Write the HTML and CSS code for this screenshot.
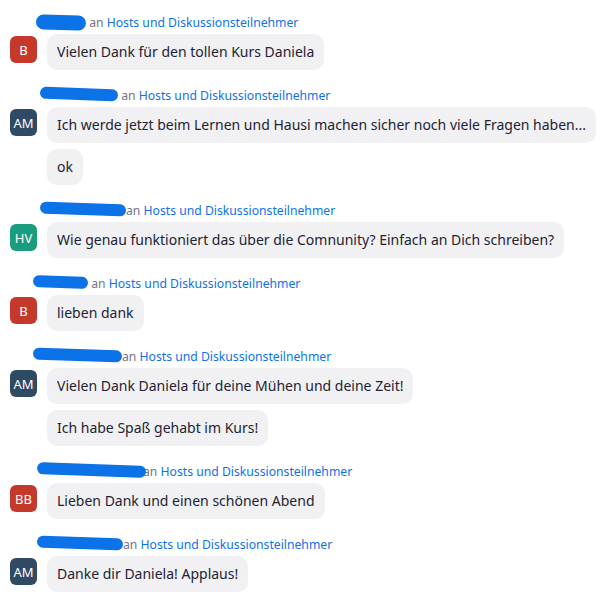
FILE: index.html
```html
<!DOCTYPE html>
<html lang="de">
<head>
    <meta charset="UTF-8">
    <meta name="viewport" content="width=device-width, initial-scale=1.0">
    <title>Chat</title>
    <link rel="stylesheet" href="styles.css">
</head>
<body>

<div class="chat">

    <div class="msg">
        <div class="meta"><span class="name n1"></span> an <span class="to">Hosts und Diskussionsteilnehmer</span></div>
        <div class="row">
            <div class="avatar red">B</div>
            <div class="bubbles">
                <div class="bubble">Vielen Dank für den tollen Kurs Daniela</div>
            </div>
        </div>
    </div>

    <div class="msg">
        <div class="meta"><span class="name n2"></span> an <span class="to">Hosts und Diskussionsteilnehmer</span></div>
        <div class="row">
            <div class="avatar navy">AM</div>
            <div class="bubbles">
                <div class="bubble">Ich werde jetzt beim Lernen und Hausi machen sicher noch viele Fragen haben...</div>
                <div class="bubble">ok</div>
            </div>
        </div>
    </div>

    <div class="msg">
        <div class="meta"><span class="name n3"></span>an <span class="to">Hosts und Diskussionsteilnehmer</span></div>
        <div class="row">
            <div class="avatar teal">HV</div>
            <div class="bubbles">
                <div class="bubble">Wie genau funktioniert das über die Comnunity? Einfach an Dich schreiben?</div>
            </div>
        </div>
    </div>

    <div class="msg">
        <div class="meta"><span class="name n4"></span> an <span class="to">Hosts und Diskussionsteilnehmer</span></div>
        <div class="row">
            <div class="avatar red">B</div>
            <div class="bubbles">
                <div class="bubble">lieben dank</div>
            </div>
        </div>
    </div>

    <div class="msg">
        <div class="meta"><span class="name n5"></span>an <span class="to">Hosts und Diskussionsteilnehmer</span></div>
        <div class="row">
            <div class="avatar navy">AM</div>
            <div class="bubbles">
                <div class="bubble">Vielen Dank Daniela für deine Mühen und deine Zeit!</div>
                <div class="bubble">Ich habe Spaß gehabt im Kurs!</div>
            </div>
        </div>
    </div>

    <div class="msg">
        <div class="meta"><span class="name n6"></span>an <span class="to">Hosts und Diskussionsteilnehmer</span></div>
        <div class="row">
            <div class="avatar red">BB</div>
            <div class="bubbles">
                <div class="bubble">Lieben Dank und einen schönen Abend</div>
            </div>
        </div>
    </div>

    <div class="msg">
        <div class="meta"><span class="name n7"></span>an <span class="to">Hosts und Diskussionsteilnehmer</span></div>
        <div class="row">
            <div class="avatar navy">AM</div>
            <div class="bubbles">
                <div class="bubble">Danke dir Daniela! Applaus!</div>
            </div>
        </div>
    </div>

</div>

</body>
</html>
```

FILE: styles.css
```css
body {
    margin: 0;
    padding: 0;
    background-color: #ffffff;
    font-family: 'Noto Sans', 'Open Sans', sans-serif;
    color: #232333;
}
.chat {
    padding: 14px 0 0 10px;
    display: flex;
    flex-direction: column;
    gap: 17px;
}
.meta {
    display: flex;
    align-items: center;
    height: 16px;
    padding-left: 26px;
    font-size: 12.2px;
    color: #747487;
    white-space: pre;
    margin-bottom: 4px;
}
.to {
    color: #0e71eb;
}
.name {
    display: inline-block;
    height: 12px;
    margin-top: -3px;
    border-radius: 6px;
    background-color: #0b72e7;
    transform: rotate(2deg);
}
.n1 { width: 50px; height: 15px; border-radius: 8px; margin-top: 0; }
.n2 { width: 78px; margin-left: 4px; }
.n3 { width: 86px; margin-left: 4px; }
.n4 { width: 55px; margin-left: -3px; }
.n5 { width: 89px; margin-left: -3px; }
.n6 { width: 109px; margin-left: 1px; margin-right: -3px; }
.n7 { width: 86px; margin-left: 1px; }
.row {
    display: flex;
    align-items: flex-start;
    gap: 10px;
}
.avatar {
    width: 27px;
    height: 27px;
    margin-top: 2px;
    border-radius: 6px;
    color: #ffffff;
    font-size: 13px;
    display: flex;
    align-items: center;
    justify-content: center;
    flex-shrink: 0;
}
.red { background-color: #c4392b; }
.navy { background-color: #2f4a63; }
.teal { background-color: #1a9c7e; }
.bubbles {
    display: flex;
    flex-direction: column;
    align-items: flex-start;
    gap: 6px;
}
.bubble {
    background-color: #f1f1f4;
    border-radius: 10px;
    padding: 8px 10px;
    font-size: 14px;
    line-height: 20px;
    white-space: nowrap;
}
```
